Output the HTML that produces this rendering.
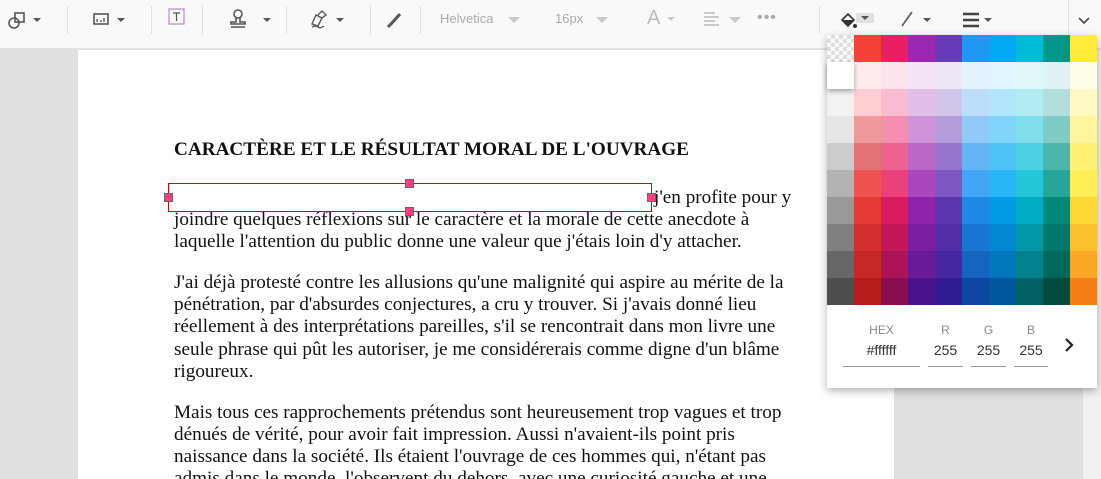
<!DOCTYPE html>
<html style="overflow:hidden;height:479px"><head><meta charset="utf-8"><style>
*{margin:0;padding:0;box-sizing:border-box}
body{width:1101px;height:479px;overflow:hidden;background:#e0e0e0;position:relative;font-family:"Liberation Sans",sans-serif}
#tb{position:absolute;left:0;top:0;width:1101px;height:49px;background:#f9f9f9;border-bottom:1px solid #e3e3e3}
.sep{position:absolute;top:6px;width:1px;height:28px;background:#e0e0e0}
.car{position:absolute;top:18px;width:0;height:0;border-left:4px solid transparent;border-right:4px solid transparent;border-top:4px solid #555}
.car.l{border-top-color:#c8c8c8;border-left-width:6px;border-right-width:6px;border-top-width:6px;top:17px}
.tx{position:absolute;top:11px;font-size:13px;color:#aaa}
#page{position:absolute;left:78px;top:50px;width:816px;height:429px;background:#fff}
#rs{position:absolute;left:1083px;top:50px;width:18px;height:429px;background:#f1f1f1}
.ln{position:absolute;left:174px;font-family:"Liberation Serif",serif;font-size:19.2px;line-height:22px;color:#111;white-space:nowrap}
h1{position:absolute;left:174px;top:139px;font-family:"Liberation Serif",serif;font-size:19.2px;font-weight:bold;color:#111;white-space:nowrap}
#sel{position:absolute;left:168px;top:183px;width:484px;height:29px;border:1px solid #d00}
.h{position:absolute;width:9px;height:9px;background:#ff3d7f;border:1px solid #666}
#pan{position:absolute;left:827px;top:35px;width:270px;height:353px;background:#fff;box-shadow:0 3px 8px rgba(0,0,0,.3)}
#grid{position:absolute;left:0;top:0;display:grid;grid-template-columns:repeat(10,27px);grid-template-rows:repeat(10,27px)}
.lab{position:absolute;top:288px;font-size:12px;color:#888;text-align:center}
.val{position:absolute;top:307px;font-size:14px;color:#333;text-align:center}
.ul{position:absolute;top:331px;height:1px;background:#999}
</style></head><body>
<div id="tb">
<svg width="1101" height="40" style="position:absolute;left:0;top:0" fill="none" stroke="#555" stroke-width="1.6">
<circle cx="14" cy="23" r="5"/><rect x="15" y="13" width="9" height="9"/>
<rect x="94" y="14" width="14" height="10"/><path d="M97 22v-3M101 22v-2M104 22v-4" stroke-width="1.3"/>
<rect x="169" y="9" width="15" height="15" stroke="#b070c0" stroke-width="1"/><path d="M173 13h7M176.5 13v8" stroke-width="1.2"/>
<circle cx="238" cy="14" r="4"/><path d="M236 18v4h-5v2h14v-2h-5v-4M231 27h14"/>
<path d="M312 24l4-9 6 3-4 8zM318 15l4-4 4 4-4 3M312 27q4-2 6 0t6-1" stroke-width="1.4"/>
<path d="M388 27l3-3M391 24l9-10" stroke-width="3"/>
<path d="M912 12l-10 14" stroke-width="1.6"/>
<path d="M963 14h16M963 20h16M963 26h16" stroke-width="2.5" stroke="#444"/>
<path d="M704 13h11M704 17h15M704 21h11M704 25h15" stroke="#bbb" stroke-width="1.4"/>
<path d="M1079 18l5 5 5-5" stroke-width="1.8"/>
</svg>
<div class="sep" style="left:67px"></div><div class="sep" style="left:151px"></div><div class="sep" style="left:202px"></div><div class="sep" style="left:286px"></div><div class="sep" style="left:370px"></div><div class="sep" style="left:420px"></div><div class="sep" style="left:819px"></div>
<div style="position:absolute;left:1068px;top:0;width:1px;height:49px;background:#e0e0e0"></div>
<div class="car" style="left:33px"></div><div class="car" style="left:117px"></div><div class="car" style="left:263px"></div><div class="car" style="left:336px"></div><div class="car" style="left:923px"></div><div class="car" style="left:984px"></div>
<div class="tx" style="left:440px">Helvetica</div><div class="car l" style="left:508px"></div>
<div class="tx" style="left:555px">16px</div><div class="car l" style="left:596px"></div>
<div class="tx" style="left:647px;font-size:20px;top:7px;color:#bbb">A</div><div class="car l" style="left:667px;border-width:4px 4px 0"></div>
<div class="car l" style="left:729px"></div>
<div class="tx" style="left:757px;top:9px;font-size:16px;color:#aaa;letter-spacing:1px">•••</div>
<svg width="20" height="20" style="position:absolute;left:839px;top:11px"><path d="M3 9l6-6 6 6-6 6z" fill="none" stroke="#333" stroke-width="1.6"/><path d="M3 9h12l-6 6z" fill="#333"/><circle cx="16" cy="15" r="2" fill="#333"/></svg>
<div style="position:absolute;left:856px;top:13px;width:18px;height:10px;background:#e0e0e0"></div><div class="car" style="left:861px;top:16px"></div>
</div>
<div id="page"></div><div id="rs"></div>
<h1>CARACTÈRE ET LE RÉSULTAT MORAL DE L'OUVRAGE</h1>
<div class="ln" style="left:654px;top:187px">j'en profite pour y</div>
<div class="ln" style="top:209px">joindre quelques réflexions sur le caractère et la morale de cette anecdote à</div>
<div class="ln" style="top:231px">laquelle l'attention du public donne une valeur que j'étais loin d'y attacher.</div>
<div class="ln" style="top:272px">J'ai déjà protesté contre les allusions qu'une malignité qui aspire au mérite de la</div>
<div class="ln" style="top:294px">pénétration, par d'absurdes conjectures, a cru y trouver. Si j'avais donné lieu</div>
<div class="ln" style="top:316px">réellement à des interprétations pareilles, s'il se rencontrait dans mon livre une</div>
<div class="ln" style="top:339px">seule phrase qui pût les autoriser, je me considérerais comme digne d'un blâme</div>
<div class="ln" style="top:361px">rigoureux.</div>
<div class="ln" style="top:402px">Mais tous ces rapprochements prétendus sont heureusement trop vagues et trop</div>
<div class="ln" style="top:424px">dénués de vérité, pour avoir fait impression. Aussi n'avaient-ils point pris</div>
<div class="ln" style="top:446px">naissance dans la société. Ils étaient l'ouvrage de ces hommes qui, n'étant pas</div>
<div class="ln" style="top:468px;height:11px;overflow:hidden">admis dans le monde, l'observent du dehors, avec une curiosité gauche et une</div>
<div id="sel"></div>
<div class="h" style="left:164px;top:193px"></div><div class="h" style="left:405px;top:179px"></div><div class="h" style="left:405px;top:207px"></div><div class="h" style="left:647px;top:193px"></div>
<div id="pan"><div id="grid">
<div style="background:repeating-conic-gradient(#ddd 0 25%,#fff 0 50%) 0 0/8px 8px"></div><div style="background:#f44336"></div><div style="background:#e91e63"></div><div style="background:#9c27b0"></div><div style="background:#673ab7"></div><div style="background:#2196f3"></div><div style="background:#03a9f4"></div><div style="background:#00bcd4"></div><div style="background:#009688"></div><div style="background:#ffeb3b"></div>
<div style="background:#fff;box-shadow:0 2px 5px rgba(0,0,0,.35);position:relative;z-index:1"></div><div style="background:#ffebee"></div><div style="background:#fce4ec"></div><div style="background:#f3e5f5"></div><div style="background:#ede7f6"></div><div style="background:#e3f2fd"></div><div style="background:#e1f5fe"></div><div style="background:#e0f7fa"></div><div style="background:#e0f2f1"></div><div style="background:#fffde7"></div>
<div style="background:#f2f2f2"></div><div style="background:#ffcdd2"></div><div style="background:#f8bbd0"></div><div style="background:#e1bee7"></div><div style="background:#d1c4e9"></div><div style="background:#bbdefb"></div><div style="background:#b3e5fc"></div><div style="background:#b2ebf2"></div><div style="background:#b2dfdb"></div><div style="background:#fff9c4"></div>
<div style="background:#e6e6e6"></div><div style="background:#ef9a9a"></div><div style="background:#f48fb1"></div><div style="background:#ce93d8"></div><div style="background:#b39ddb"></div><div style="background:#90caf9"></div><div style="background:#81d4fa"></div><div style="background:#80deea"></div><div style="background:#80cbc4"></div><div style="background:#fff59d"></div>
<div style="background:#ccc"></div><div style="background:#e57373"></div><div style="background:#f06292"></div><div style="background:#ba68c8"></div><div style="background:#9575cd"></div><div style="background:#64b5f6"></div><div style="background:#4fc3f7"></div><div style="background:#4dd0e1"></div><div style="background:#4db6ac"></div><div style="background:#fff176"></div>
<div style="background:#b3b3b3"></div><div style="background:#ef5350"></div><div style="background:#ec407a"></div><div style="background:#ab47bc"></div><div style="background:#7e57c2"></div><div style="background:#42a5f5"></div><div style="background:#29b6f6"></div><div style="background:#26c6da"></div><div style="background:#26a69a"></div><div style="background:#ffee58"></div>
<div style="background:#999"></div><div style="background:#e53935"></div><div style="background:#d81b60"></div><div style="background:#8e24aa"></div><div style="background:#5e35b1"></div><div style="background:#1e88e5"></div><div style="background:#039be5"></div><div style="background:#00acc1"></div><div style="background:#00897b"></div><div style="background:#fdd835"></div>
<div style="background:#808080"></div><div style="background:#d32f2f"></div><div style="background:#c2185b"></div><div style="background:#7b1fa2"></div><div style="background:#512da8"></div><div style="background:#1976d2"></div><div style="background:#0288d1"></div><div style="background:#0097a7"></div><div style="background:#00796b"></div><div style="background:#fbc02d"></div>
<div style="background:#666"></div><div style="background:#c62828"></div><div style="background:#ad1457"></div><div style="background:#6a1b9a"></div><div style="background:#4527a0"></div><div style="background:#1565c0"></div><div style="background:#0277bd"></div><div style="background:#00838f"></div><div style="background:#00695c"></div><div style="background:#f9a825"></div>
<div style="background:#4d4d4d"></div><div style="background:#b71c1c"></div><div style="background:#880e4f"></div><div style="background:#4a148c"></div><div style="background:#311b92"></div><div style="background:#0d47a1"></div><div style="background:#01579b"></div><div style="background:#006064"></div><div style="background:#004d40"></div><div style="background:#f57f17"></div>
</div>
<div class="lab" style="left:16px;width:77px">HEX</div><div class="val" style="left:16px;width:77px">#ffffff</div><div class="ul" style="left:16px;width:77px"></div>
<div class="lab" style="left:101px;width:35px">R</div><div class="val" style="left:101px;width:35px">255</div><div class="ul" style="left:101px;width:35px"></div>
<div class="lab" style="left:144px;width:35px">G</div><div class="val" style="left:144px;width:35px">255</div><div class="ul" style="left:144px;width:35px"></div>
<div class="lab" style="left:187px;width:34px">B</div><div class="val" style="left:187px;width:34px">255</div><div class="ul" style="left:187px;width:34px"></div>
<svg width="12" height="16" style="position:absolute;left:236px;top:302px"><path d="M3 2l6 6-6 6" fill="none" stroke="#222" stroke-width="2.2"/></svg>
</div>
</body></html>
